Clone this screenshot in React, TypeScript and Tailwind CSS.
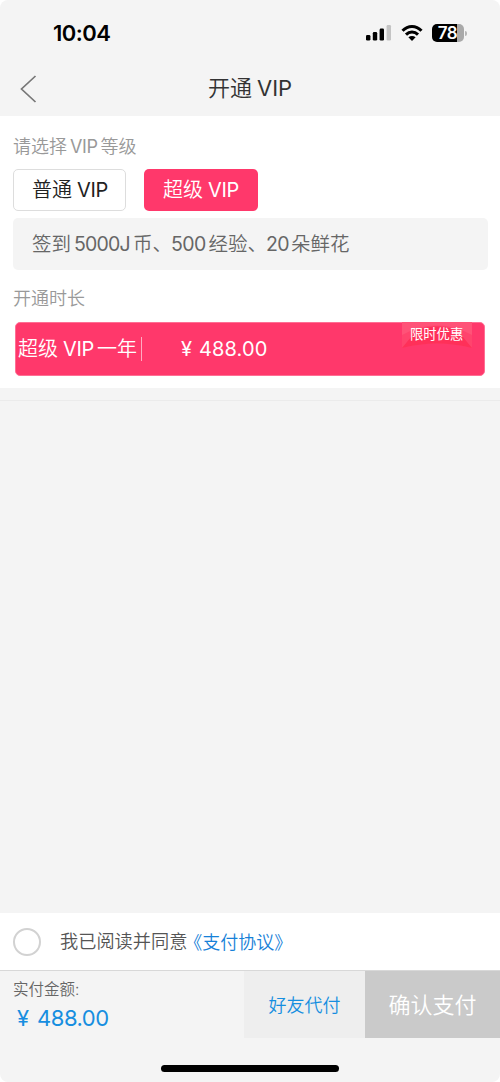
import type { ReactNode } from 'react';

function Latin({ children, className = '' }: { children: ReactNode; className?: string }) {
  return <span className={`font-normal ${className}`}>{children}</span>;
}

function StatusBar() {
  return (
    <div className="flex h-[66px] items-center pl-[53px] pr-[33px]">
      <span className="text-[22px] font-semibold leading-[26px] tracking-[-0.5px] text-black">10:04</span>
      <div className="ml-auto flex items-center">
        <svg width="26" height="18" viewBox="0 0 26 18" className="mr-[9px]">
          <rect x="0" y="11" width="4.4" height="5.6" rx="1.3" />
          <rect x="6.8" y="8" width="4.4" height="8.6" rx="1.3" />
          <rect x="13.6" y="4.6" width="4.4" height="12" rx="1.3" />
          <rect x="20.6" y="1" width="4.4" height="15.6" rx="1.3" fill="#c4c4c4" />
        </svg>
        <svg width="22" height="18" viewBox="0 0 22 18" className="mr-[9px]">
          <g fill="none" stroke="#000" strokeWidth="3">
            <path d="M1.5 6.8C7 1.1 15 1.1 20.5 6.8" />
            <path d="M5 10.6C8.5 7.1 13.5 7.1 17 10.6" />
          </g>
          <path d="M7.4 13.3C9.5 11.5 12.5 11.5 14.6 13.3L11 17Z" />
        </svg>
        <div className="flex h-[18px] w-8 items-center justify-center overflow-hidden rounded-[5px] bg-[linear-gradient(90deg,#000_78%,#a9a9a9_78%)] pr-px text-[17px] font-semibold leading-[18px] tracking-[-0.5px] text-white">
          78
        </div>
        <div className="ml-px h-[5px] w-[2px] rounded-r-full bg-[#b5b5b5]" />
      </div>
    </div>
  );
}

export default function App() {
  return (
    <div className="h-[1082px] w-[500px] overflow-hidden bg-white font-['Inter','Noto_Sans_CJK_SC',sans-serif]">
      <div className="flex h-full flex-col overflow-hidden whitespace-nowrap rounded-[8px] bg-[#f4f4f4]">
        <StatusBar />
        <header className="flex h-[50px] shrink-0 items-center pb-[5px]">
          <svg width="17" height="28" viewBox="0 0 17 28" className="ml-5" fill="none" stroke="#777" strokeWidth="1.7">
            <path d="M15.5 1L1.5 14L15.5 27" />
          </svg>
          <h1 className="ml-[171px] pb-px text-[22px] font-[350] leading-[30px] text-[#333]">
            开通<Latin className="ml-[5px]">VIP</Latin>
          </h1>
        </header>

        <main className="h-[272px] shrink-0 bg-white px-[13px] pt-[18px]">
          <h2 className="text-[18px] font-[350] leading-[26px] text-[#999]">
            请选择<Latin className="mx-[3px] tracking-[-0.4px]">VIP</Latin>等级
          </h2>
          <div className="mt-[9px] flex gap-[18px] text-[20px] leading-[39px]">
            <button className="h-[42px] w-[113px] rounded-[5px] border border-[#ddd] bg-white pl-[18px] pt-px text-left font-[350] text-[#222]">
              普通<Latin className="ml-[5px] tracking-[-0.3px]">VIP</Latin>
            </button>
            <button className="h-[42px] w-[114px] rounded-[5px] bg-[#ff386b] pl-[19px] pt-px text-left font-[350] text-white">
              超级<Latin className="ml-[5px] tracking-[-0.3px]">VIP</Latin>
            </button>
          </div>
          <p className="mt-[7px] h-[52px] w-[475px] rounded-[5px] bg-[#f4f4f4] pl-[19px] text-[19.5px] font-[350] leading-[53px] text-[#666]">
            签到<Latin className="ml-[3px] mr-[3px] tracking-[-0.8px]">5000J</Latin>币、
            <Latin className="ml-[-1px] mr-[3px] tracking-[-0.6px]">500</Latin>经验、
            <Latin className="ml-[-1px] mr-[2px] tracking-[-0.7px]">20</Latin>朵鲜花
          </p>
          <h2 className="mt-[16px] text-[18px] font-[350] leading-[26px] text-[#999]">开通时长</h2>
          <div className="relative ml-[2px] mt-[10px] flex h-[54px] w-[470px] items-center rounded-[5px] border border-[#ff6f94] bg-[#ff386b] pl-[2px] text-[20px] font-[350] text-white">
            <span>
              超级<Latin className="ml-[5px] mr-[3px] tracking-[-0.3px]">VIP</Latin>一年
            </span>
            <span className="ml-[4px] h-6 w-px bg-[#ffabc1]" />
            <Latin className="ml-[39px]">¥</Latin>
            <Latin className="ml-[7px] tracking-[0.1px]">488.00</Latin>
            <div className="absolute right-[12px] top-[-1px] h-[27px] w-[70px]">
              <svg width="70" height="27" viewBox="0 0 70 27" className="absolute inset-0">
                <path d="M0 0H70V26Q35 17 0 26Z" fill="#ff446d" />
                <path d="M0 26L14 9Q35 0 56 9L70 26Q35 17 0 26Z" fill="#ff3059" />
                <path d="M0 0H70V13Q35-6 0 13Z" fill="#ff6684" opacity=".45" />
              </svg>
              <span className="relative ml-[8px] block text-[13.3px] font-normal leading-[24px]">限时优惠</span>
            </div>
          </div>
        </main>

        <div className="h-[13px] shrink-0 border-b border-[#ebebeb]" />
        <div className="flex-1" />

        <label className="flex h-[57px] shrink-0 items-center bg-white pl-[13px] text-[18.2px] font-[350]">
          <span className="h-7 w-7 rounded-full border-2 border-[#d2d2d2]" />
          <span className="ml-[19px] pt-px text-[#555]">我已阅读并同意</span>
          <span className="ml-[-3px] pt-px text-[18px] text-[#1681d8]">《支付协议》</span>
        </label>

        <footer className="flex h-[68px] shrink-0 border-t border-[#d8d8d8] font-[350]">
          <div className="w-[244px] pl-[13px] pt-[7px]">
            <p className="text-[15.5px] leading-[23px] text-[#666]">实付金额:</p>
            <p className="ml-[4px] mt-[2px] text-[22px] leading-[31px] text-[#168ee0]">
              <Latin>¥</Latin>
              <Latin className="ml-[8px] tracking-[-0.5px]">488.00</Latin>
            </p>
          </div>
          <button className="w-[121px] bg-[#eee] pt-[2px] text-[18px] text-[#168ee0]">好友代付</button>
          <button className="w-[135px] bg-[#cacaca] pt-[2px] text-[22px] text-white">确认支付</button>
        </footer>
        <div className="flex h-[44px] shrink-0 justify-center pt-[27px]">
          <div className="h-[7px] w-[178px] rounded-full bg-black" />
        </div>
      </div>
    </div>
  );
}
